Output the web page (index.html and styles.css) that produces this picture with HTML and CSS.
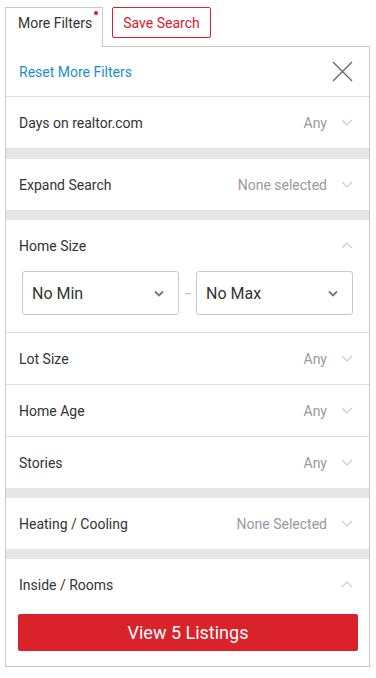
FILE: index.html
```html
<!DOCTYPE html>
<html>
<head>
<meta charset="utf-8">
<link rel="stylesheet" href="styles.css">
</head>
<body>
<div class="wrap">
  <div class="tabs">
    <div class="tab">More Filters<span class="dot"></span></div>
    <button class="save">Save Search</button>
  </div>
  <div class="panel">
    <div class="head">
      <a class="reset">Reset More Filters</a>
      <svg class="close" width="21" height="21" viewBox="0 0 21 21"><path d="M1 1L20 20M20 1L1 20" stroke="#666" stroke-width="1.3" fill="none"/></svg>
    </div>
    <div class="row"><span class="label">Days on realtor.com</span><span class="val">Any</span><svg class="chev" width="12" height="7" viewBox="0 0 12 7"><path d="M1 1L6 6L11 1" stroke="#ccc" stroke-width="1.2" fill="none"/></svg></div>
    <div class="band"></div>
    <div class="row nob"><span class="label">Expand Search</span><span class="val">None selected</span><svg class="chev" width="12" height="7" viewBox="0 0 12 7"><path d="M1 1L6 6L11 1" stroke="#ccc" stroke-width="1.2" fill="none"/></svg></div>
    <div class="band"></div>
    <div class="section">
      <div class="row nob"><span class="label">Home Size</span><svg class="chev" width="12" height="7" viewBox="0 0 12 7"><path d="M1 6L6 1L11 6" stroke="#ccc" stroke-width="1.2" fill="none"/></svg></div>
      <div class="range">
        <div class="sel"><span>No Min</span><svg width="10" height="7" viewBox="0 0 10 7"><path d="M1 1.5L5 5.5L9 1.5" stroke="#777" stroke-width="1.8" fill="none"/></svg></div>
        <span class="dash"></span>
        <div class="sel"><span>No Max</span><svg width="10" height="7" viewBox="0 0 10 7"><path d="M1 1.5L5 5.5L9 1.5" stroke="#777" stroke-width="1.8" fill="none"/></svg></div>
      </div>
    </div>
    <div class="row"><span class="label">Lot Size</span><span class="val">Any</span><svg class="chev" width="12" height="7" viewBox="0 0 12 7"><path d="M1 1L6 6L11 1" stroke="#ccc" stroke-width="1.2" fill="none"/></svg></div>
    <div class="row"><span class="label">Home Age</span><span class="val">Any</span><svg class="chev" width="12" height="7" viewBox="0 0 12 7"><path d="M1 1L6 6L11 1" stroke="#ccc" stroke-width="1.2" fill="none"/></svg></div>
    <div class="row nob"><span class="label">Stories</span><span class="val">Any</span><svg class="chev" width="12" height="7" viewBox="0 0 12 7"><path d="M1 1L6 6L11 1" stroke="#ccc" stroke-width="1.2" fill="none"/></svg></div>
    <div class="band"></div>
    <div class="row nob"><span class="label">Heating / Cooling</span><span class="val">None Selected</span><svg class="chev" width="12" height="7" viewBox="0 0 12 7"><path d="M1 1L6 6L11 1" stroke="#ccc" stroke-width="1.2" fill="none"/></svg></div>
    <div class="band"></div>
    <div class="row nob"><span class="label">Inside / Rooms</span><svg class="chev" width="12" height="7" viewBox="0 0 12 7"><path d="M1 6L6 1L11 6" stroke="#ccc" stroke-width="1.2" fill="none"/></svg></div>
    <div class="foot"><button class="view">View 5 Listings</button></div>
  </div>
</div>
</body>
</html>
```
FILE: styles.css
```css
* { box-sizing: border-box; }
body { margin: 0; background: #fff; font-family: Roboto, "Liberation Sans", sans-serif; color: #333; }
.wrap { padding: 7px 0 0 5px; width: 370px; }
.tabs { display: flex; align-items: flex-start; }
.tab { position: relative; width: 98px; height: 40px; border: 1px solid #c8c8c8; border-bottom: none; background: #fff; margin-bottom: -1px; z-index: 1; font-size: 14px; padding: 7px 0 0 12px; line-height: 16px; }
.dot { position: absolute; right: 4px; top: 3px; width: 4px; height: 4px; border-radius: 50%; background: #d9202a; }
.save { margin-left: 9px; width: 99px; height: 31px; border: 1px solid #d9202a; border-radius: 2px; background: #fff; color: #d9202a; font-family: inherit; font-size: 14px; padding: 0; }
.panel { border: 1px solid #c8c8c8; width: 365px; }
.head { height: 50px; display: flex; align-items: center; justify-content: space-between; padding: 0 16px 0 13px; border-bottom: 1px solid #ddd; }
.reset { color: #1a8fd0; font-size: 14px; }
.close { display: block; }
.row { height: 52px; display: flex; align-items: center; padding: 0 16px 0 13px; border-bottom: 1px solid #ddd; font-size: 14px; }
.row.nob { border-bottom: none; height: 51px; }
.label { flex: 1; color: #333; }
.val { color: #999; margin-right: 14px; }
.chev { display: block; }
.band { height: 10px; background: #e6e6e6; }
.section { border-bottom: 1px solid #ddd; padding-bottom: 17px; }
.range { display: flex; align-items: center; padding: 0 16px; }
.sel { flex: 1; height: 44px; border: 1px solid #c8c8c8; border-radius: 3px; display: flex; align-items: center; justify-content: space-between; padding: 0 14px 0 9px; font-size: 16px; color: #333; }
.dash { width: 6px; height: 1px; background: #bbb; margin: 0 5px 0 6px; }
.foot { padding: 4px 11px 15px 12px; }
.view { display: block; width: 100%; height: 37px; border: none; border-radius: 2px; background: #d9222a; color: #fff; font-family: inherit; font-size: 18px; padding: 0; }
```
